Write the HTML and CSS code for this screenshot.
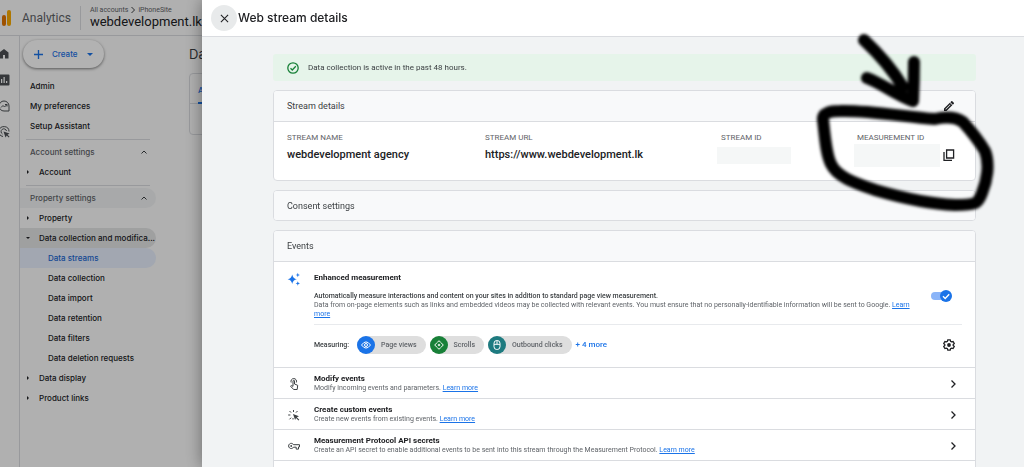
FILE: index.html
```html
<!DOCTYPE html>
<html lang="en">
<head>
<meta charset="utf-8">
<title>Analytics - Web stream details</title>
<link rel="stylesheet" href="styles.css">
</head>
<body>
<div class="app">
  <header class="topbar">
    <svg class="logo" viewBox="0 0 9 16" aria-hidden="true"><rect x="5" y="0" width="4" height="16" rx="2" fill="#f9ab00"/><rect x="0" y="5" width="4" height="11" rx="2" fill="#e37400"/></svg>
    <span class="product">Analytics</span>
    <div class="account">
      <span class="crumbs">All accounts <svg class="crumb-arrow" viewBox="0 0 6 8" aria-hidden="true"><path d="M1.500 1l3 3-3 3"/></svg> iPhoneSite</span>
      <span class="site">webdevelopment.lk</span>
    </div>
  </header>
  <div class="workspace">
    <nav class="rail" aria-label="Sections">
      <a href="#" aria-label="Home"><svg viewBox="0 0 24 24"><path d="M10 21v-7h4v7h7V9l-9-7-9 7v12z"/></svg></a>
      <a href="#" aria-label="Reports"><svg viewBox="0 0 24 24"><path fill-rule="evenodd" d="M3 1h18q2 0 2 2v18q0 2-2 2H3q-2 0-2-2V3q0-2 2-2zM6 10v8h2.500v-8zM11 6v12h2.500V6zM16 14v4h2.500v-4z"/></svg></a>
      <a href="#" aria-label="Explore"><svg class="line" viewBox="0 0 24 24"><path d="M12 2a10 10 0 1 0 0 20h10V12A10 10 0 0 0 12 2zM6 15l4-4 3 3 5-5M14 9h4v4"/></svg></a>
      <a href="#" aria-label="Advertising"><svg class="line" viewBox="0 0 24 24"><path d="M10 21A10 10 0 1 1 22 11M9 16a5.500 5.500 0 1 1 8-6"/><path class="pointer" d="M11 11l12 4-4 2.500 4 4-1.500 1.500-4-4-2.500 4z"/></svg></a>
    </nav>
    <nav class="sidebar" aria-label="Admin">
      <button class="create" type="button"><svg class="plus" viewBox="0 0 10 10" aria-hidden="true"><path d="M5 0v10M0 5h10"/></svg>Create<svg class="drop" viewBox="0 0 6 3" aria-hidden="true"><path d="M0 0h6L3 3z"/></svg></button>
      <a class="item" href="#">Admin</a>
      <a class="item" href="#">My preferences</a>
      <a class="item" href="#">Setup Assistant</a>
      <hr>
      <button class="item group" type="button">Account settings<svg class="chev" viewBox="0 0 6 4" aria-hidden="true"><path d="M.5 3.500L3 1l2.500 2.500"/></svg></button>
      <a class="item branch" href="#">Account</a>
      <hr>
      <button class="item group shaded" type="button">Property settings<svg class="chev" viewBox="0 0 6 4" aria-hidden="true"><path d="M.5 3.500L3 1l2.500 2.500"/></svg></button>
      <a class="item branch" href="#">Property</a>
      <a class="item branch open" href="#">Data collection and modifica...</a>
      <a class="item leaf current" href="#">Data streams</a>
      <a class="item leaf" href="#">Data collection</a>
      <a class="item leaf" href="#">Data import</a>
      <a class="item leaf" href="#">Data retention</a>
      <a class="item leaf" href="#">Data filters</a>
      <a class="item leaf" href="#">Data deletion requests</a>
      <a class="item branch" href="#">Data display</a>
      <a class="item branch" href="#">Product links</a>
    </nav>
    <main class="page">
      <h1>Data streams</h1>
      <div class="tabs"><a href="#">All</a></div>
    </main>
  </div>
</div>
<div class="scrim"></div>

<section class="drawer" role="dialog" aria-labelledby="drawer-title">
  <header class="drawer-head">
    <button class="close" type="button" aria-label="Close"><svg viewBox="0 0 10 10"><path d="M1 1l8 8M9 1L1 9"/></svg></button>
    <h2 id="drawer-title">Web stream details</h2>
  </header>
  <div class="drawer-body">
    <p class="notice"><svg viewBox="0 0 12 12" aria-hidden="true"><circle cx="6" cy="6" r="5.200"/><path d="M3.500 6.200l1.800 1.800 3.500-3.700"/></svg>Data collection is active in the past 48 hours.</p>

    <section class="card marked">
      <header class="card-head"><h3>Stream details</h3>
        <button class="icon" type="button" aria-label="Edit"><svg viewBox="0 0 24 24"><path d="M14.060 9.020l.92.92L5.920 19H5v-.92l9.060-9.060M17.660 2c-.35 0-.7.100-1 .4l-2 2 5 5 2-2c.5-.5.5-1.300 0-1.800l-3.100-3.200c-.3-.3-.6-.4-.9-.4zm-4 3.400L2 17v5h5L18.600 10.400z"/></svg></button>
      </header>
      <dl class="facts">
        <div><dt>STREAM NAME</dt><dd>webdevelopment agency</dd></div>
        <div><dt>STREAM URL</dt><dd>https://www.webdevelopment.lk</dd></div>
        <div><dt>STREAM ID</dt><dd><span class="blank"></span></dd></div>
        <div><dt>MEASUREMENT ID</dt><dd><span class="blank tall"></span><button class="icon" type="button" aria-label="Copy"><svg viewBox="0 0 12 12"><path class="stroke" d="M3.600 1h7v8h-7zM1 3v8.400h8"/></svg></button></dd></div>
      </dl>
      <svg class="scribble" viewBox="810 28 190 187" aria-hidden="true">
        <path d="M864 40C879 54 891 67 903 87M867 78C883 84 896 95 913 101Q914 82 914 62"/>
        <path d="M823 120C822 113 830 111 840 111C869 110 905 117 935 119C944 117 954 116 963 122C972 132 979 141 985 151C990 164 987 181 982 193C978 204 976 205 955 205C930 204 899 197 875 190C855 183 837 177 831 164C826 154 825 137 823 120Z"/>
      </svg>
    </section>

    <section class="card"><header class="card-head"><h3>Consent settings</h3></header></section>

    <section class="card">
      <header class="card-head"><h3>Events</h3></header>
      <div class="enhanced">
        <svg class="lead" viewBox="0 0 14 14" aria-hidden="true"><path fill="#1a73e8" d="M5.200 2.500Q5.900 6.500 9.800 7.200Q5.900 7.900 5.200 12Q4.500 7.900.6 7.200Q4.500 6.500 5.200 2.500zM10.800.8l.6 1.600 1.600.6-1.600.6-.6 1.700-.6-1.700-1.600-.6 1.600-.6zM10.800 9.200l.6 1.600 1.600.6-1.600.6-.6 1.700-.6-1.700-1.600-.6 1.600-.6z"/></svg>
        <div class="enhanced-main">
          <div class="intro">
            <div class="copy">
              <h4 id="enhanced-title">Enhanced measurement</h4>
              <p class="summary">Automatically measure interactions and content on your sites in addition to standard page view measurement.</p>
              <p>Data from on-page elements such as links and embedded videos may be collected with relevant events. You must ensure that no personally-identifiable information will be sent to Google. <a href="#">Learn more</a></p>
            </div>
            <label class="switch"><input type="checkbox" checked aria-labelledby="enhanced-title"><svg viewBox="0 0 12 12" aria-hidden="true"><circle cx="6" cy="6" r="6"/><path d="M3 6.200l2.200 2.200 4-4.200"/></svg></label>
          </div>
          <div class="measuring">
            <span class="measuring-label">Measuring:</span>
            <span class="chip"><svg class="blue" viewBox="0 0 18 18" aria-hidden="true"><circle class="disc" cx="9" cy="9" r="9"/><path d="M4.500 9Q9 2.800 13.500 9Q9 15.200 4.500 9z"/><circle cx="9" cy="9" r="1.500"/></svg>Page views</span>
            <span class="chip"><svg class="green" viewBox="0 0 18 18" aria-hidden="true"><circle class="disc" cx="9" cy="9" r="9"/><path d="M7 6.700l2-2 2 2M7 11.300l2 2 2-2M6.700 7l-2 2 2 2M11.300 7l2 2-2 2"/><circle cx="9" cy="9" r=".8"/></svg>Scrolls</span>
            <span class="chip"><svg class="teal" viewBox="0 0 18 18" aria-hidden="true"><circle class="disc" cx="9" cy="9" r="9"/><rect x="6" y="4.500" width="6" height="9" rx="2.800"/><path d="M6 8.300h6M9 4.500v3.800"/></svg>Outbound clicks</span>
            <a class="more" href="#">+ 4 more</a>
            <button class="icon gear" type="button" aria-label="Measurement settings"><svg viewBox="0 0 12 12"><path class="stroke" d="M4.800.8h2.400l.4 1.500 1 .6 1.500-.4 1.200 2-1.100 1.100v.8l1.100 1.100-1.200 2-1.500-.4-1 .6-.4 1.500H4.800l-.4-1.500-1-.6-1.500.4-1.200-2 1.100-1.100v-.8L.7 4.500l1.200-2 1.500.4 1-.6z"/><circle cx="6" cy="6" r="1.900"/></svg></button>
          </div>
        </div>
      </div>
      <div class="row">
        <svg class="lead" viewBox="0 0 14 14" aria-hidden="true"><path d="M4.200 5.500A2.800 2.800 0 1 1 9.300 5.500M6 9.300V3.700Q6.700 2.800 7.500 3.700V7l3.200 1.300-.5 4.200H6.800L3.500 9.300l.8-.7L6 9.300"/></svg>
        <div><h4>Modify events</h4><p>Modify incoming events and parameters. <a href="#">Learn more</a></p></div>
        <button class="icon" type="button" aria-label="Modify events"><svg viewBox="0 0 12 12"><path class="stroke" d="M4.500 2.500L8 6 4.500 9.500"/></svg></button>
      </div>
      <div class="row">
        <svg class="lead" viewBox="0 0 14 14" aria-hidden="true"><path d="M6.500 2v2M2.500 3l1.600 1.600M1.200 7h2.200M2.500 11.300l1.600-1.600M10.500 3L9 4.600M6 10v1.500"/><path class="solid" d="M6 6l6 2.200-2.200 1.100 2.500 2.500-.8.800L9 10.100 8.100 12z"/></svg>
        <div><h4>Create custom events</h4><p>Create new events from existing events. <a href="#">Learn more</a></p></div>
        <button class="icon" type="button" aria-label="Create custom events"><svg viewBox="0 0 12 12"><path class="stroke" d="M4.500 2.500L8 6 4.500 9.500"/></svg></button>
      </div>
      <div class="row">
        <svg class="lead" viewBox="0 0 14 14" aria-hidden="true"><path d="M6.500 5.700h6v2.200h-1v2.200H9.200V8.200H6.500A2.600 2.600 0 1 1 6.500 5.700z"/><circle class="solid" cx="4.200" cy="7" r=".9"/></svg>
        <div><h4>Measurement Protocol API secrets</h4><p>Create an API secret to enable additional events to be sent into this stream through the Measurement Protocol. <a href="#">Learn more</a></p></div>
        <button class="icon" type="button" aria-label="Measurement Protocol API secrets"><svg viewBox="0 0 12 12"><path class="stroke" d="M4.500 2.500L8 6 4.500 9.500"/></svg></button>
      </div>
      <div class="row"></div>
    </section>
  </div>
</section>
</body>
</html>
```
FILE: styles.css
```css
* { box-sizing: border-box; }
body { margin: 0; height: 100vh; overflow: hidden; font: 8px/12px Roboto, "Liberation Sans", sans-serif; color: #3c4043; }
h1, h2, h3, h4, p, dl, dd { margin: 0; }
a { color: #1a73e8; }
button { border: 0; padding: 0; background: none; font: inherit; color: inherit; }
svg { display: block; flex: none; fill: none; }

.app { height: 100%; display: flex; flex-direction: column; background: #fcfcfc; }
.topbar { display: flex; align-items: center; height: 36px; border-bottom: 1px solid #dadce0; }
.logo { width: 9px; height: 16px; margin-left: 2px; }
.product { margin-left: 11px; font-size: 12px; line-height: 16px; color: #5f6368; }
.account { display: flex; flex-direction: column; margin-left: 9px; padding-left: 9px; border-left: 1px solid #dadce0; white-space: nowrap; }
.crumbs { display: flex; align-items: center; gap: 2px; font-size: 7px; line-height: 8px; color: #5f6368; }
.crumb-arrow { width: 6px; height: 8px; stroke: #3c4043; }
.site { font-size: 13px; line-height: 16px; color: #202124; }

.workspace { flex: 1; display: flex; min-height: 0; }
.rail { width: 20px; flex: none; display: flex; flex-direction: column; gap: 14px; padding-top: 12px; border-right: 1px solid #dadce0; overflow: hidden; }
.rail svg { width: 12px; height: 12px; margin-left: -2px; fill: #4c5054; }
.rail .line { fill: none; stroke: #4c5054; stroke-width: 2; }
.rail .pointer { fill: #4c5054; stroke: none; }
.sidebar { width: 136px; flex: none; display: flex; flex-direction: column; align-items: stretch; font: 500 8px/20px Inter, sans-serif; }
.create { align-self: flex-start; display: flex; align-items: center; gap: 9px; height: 28px; margin: 4px 3px 8px; padding: 0 11px; border-radius: 14px; background: #fff; box-shadow: 0 1px 3px rgba(0, 0, 0, .5); color: #1a73e8; }
.plus { width: 9px; height: 9px; stroke: #1a73e8; stroke-width: 1.5; }
.drop { width: 6px; height: 3px; margin-left: 1px; fill: #1a73e8; }
.item { display: flex; align-items: center; flex: none; height: 20px; padding: 0 0 0 10px; border-radius: 0 10px 10px 0; color: #202124; text-decoration: none; white-space: nowrap; }
.sidebar hr { flex: none; width: 124px; height: 1px; margin: 3px 6px 2px; border: 0; background: #dadce0; }
.group { justify-content: space-between; padding-right: 9px; color: #5f6368; }
.shaded { background: #f1f3f4; }
.chev { width: 6px; height: 4px; stroke: #3c4043; }
.branch { gap: 9px; padding-left: 6px; }
.branch::before { content: ""; flex: none; width: 4px; height: 4px; background: #202124; clip-path: polygon(25% 0, 75% 50%, 25% 100%); }
.open { background: #e4e5e6; }
.open::before { clip-path: polygon(0 25%, 100% 25%, 50% 75%); }
.leaf { padding-left: 28px; }
.current { background: #e8f0fe; color: #1967d2; }
.page { flex: 1; padding: 9px 9px 9px 33px; }
.page h1 { font: 13px/18px Inter, sans-serif; color: #3c4043; }
.tabs { height: 62px; margin-top: 10px; border: 1px solid #dadce0; border-radius: 4px; }
.tabs a { display: block; height: 30px; padding: 0 8px; border-bottom: 1px solid #dadce0; font: 500 8px/32px Inter, sans-serif; text-decoration: none; }
.tabs a::after { content: ""; display: block; width: 30px; height: 2px; margin-top: -4px; background: #1a73e8; }

.scrim { position: fixed; inset: 0; background: rgba(0, 0, 0, .3); }
.drawer { position: fixed; inset: 0 0 0 202px; display: flex; flex-direction: column; background: #f1f3f4; box-shadow: 0 0 16px rgba(0, 0, 0, .4); }
.drawer-head { display: flex; align-items: center; flex: none; height: 37px; padding-left: 9px; background: #fff; border-bottom: 1px solid #dadce0; }
.drawer-head h2 { font: 500 12px/16px Inter, sans-serif; color: #202124; }
.close { display: grid; place-items: center; width: 26px; height: 26px; margin-right: 1px; border-radius: 50%; background: #e8eaeb; }
.close svg { width: 9px; height: 9px; stroke: #202124; stroke-width: 1.2; }
.drawer-body { flex: 1; display: flex; flex-direction: column; gap: 9px; min-height: 0; padding: 17px 48px 0 71px; }
.notice { display: flex; align-items: center; gap: 9px; flex: none; height: 27px; padding-left: 14px; border-radius: 3px; background: #e6f4ea; font-size: 8px; }
.notice svg { width: 12px; height: 12px; stroke: #188038; stroke-width: 1.3; }

.card { flex: none; border: 1px solid #dadce0; border-radius: 4px; background: #fff; }
.card-head { display: flex; align-items: center; justify-content: space-between; height: 29px; padding: 0 20px 0 13px; border-radius: 3px; background: #f8f9fa; }
.card-head:not(:last-child) { height: 31px; border-bottom: 1px solid #dadce0; border-radius: 3px 3px 0 0; }
.card-head h3 { font-size: 9px; font-weight: 400; color: #3c4043; }
.icon { display: grid; place-items: center; flex: none; width: 12px; height: 12px; }
.icon svg { width: 12px; height: 12px; fill: #202124; }
.icon .stroke { fill: none; stroke: #202124; stroke-width: 1.3; }
.marked { position: relative; }
.facts { display: grid; grid-template-columns: 198fr 236fr 136fr 105fr; padding: 10px 13px 14px; }
.facts dt { color: #5f6368; white-space: nowrap; }
.facts dd { display: flex; align-items: center; gap: 3px; height: 22px; font-size: 11px; line-height: 20px; font-weight: 500; color: #202124; white-space: nowrap; }
.blank { width: 74px; height: 17px; margin-left: -4px; background: #f5f7f7; }
.tall { width: 86px; height: 23px; margin-left: -3px; }
.scribble { position: absolute; top: -63px; right: -25px; width: 190px; height: 187px; pointer-events: none; filter: blur(1.5px); stroke: #000; stroke-width: 12; stroke-linecap: round; stroke-linejoin: round; }

.enhanced { display: flex; gap: 13px; padding: 10px 13px 13px; }
.lead { width: 14px; height: 14px; stroke: #3c4043; }
.enhanced .lead { stroke: none; }
.enhanced-main { flex: 1; min-width: 0; }
.intro { display: flex; align-items: center; gap: 14px; padding: 0 10px 5px 0; border-bottom: 1px solid #e8eaed; }
.copy { flex: 1; }
h4 { font-size: 8px; line-height: 12px; font-weight: 700; color: #202124; }
.copy p { font-size: 7px; line-height: 9px; color: #5f6368; }
.copy .summary { margin-top: 8px; font-weight: 500; color: #3c4043; }
.switch { display: flex; align-items: center; }
.switch input { appearance: none; width: 17px; height: 8px; margin: 0 -8px 0 0; border-radius: 4px; background: #8ab4f8; }
.switch svg { position: relative; width: 12px; height: 12px; fill: #1a73e8; }
.switch path { fill: none; stroke: #fff; stroke-width: 1.4; }
.measuring { display: flex; align-items: center; gap: 4px; padding-top: 11px; }
.measuring-label { margin-right: 4px; font-size: 7px; font-weight: 500; }
.chip { display: flex; align-items: center; gap: 6px; height: 18px; padding-right: 9px; border-radius: 9px; background: #dedede; font-size: 7px; font-weight: 500; color: #5f6368; }
.chip svg { width: 18px; height: 18px; stroke: #fff; }
.chip .disc { stroke: none; }
.blue .disc { fill: #1a73e8; }
.green .disc { fill: #188038; }
.teal .disc { fill: #1e7b80; }
.more { font-size: 8px; font-weight: 500; text-decoration: none; }
.gear { margin-left: auto; margin-right: 7px; }
.row { display: flex; align-items: center; gap: 13px; min-height: 31px; padding: 6px 16px 5px 13px; border-top: 1px solid #dadce0; }
.row div { flex: 1; }
.row h4 { line-height: 10px; }
.row p { font-size: 7px; line-height: 9px; color: #5f6368; }
.solid { fill: #3c4043; stroke: none; }
```
